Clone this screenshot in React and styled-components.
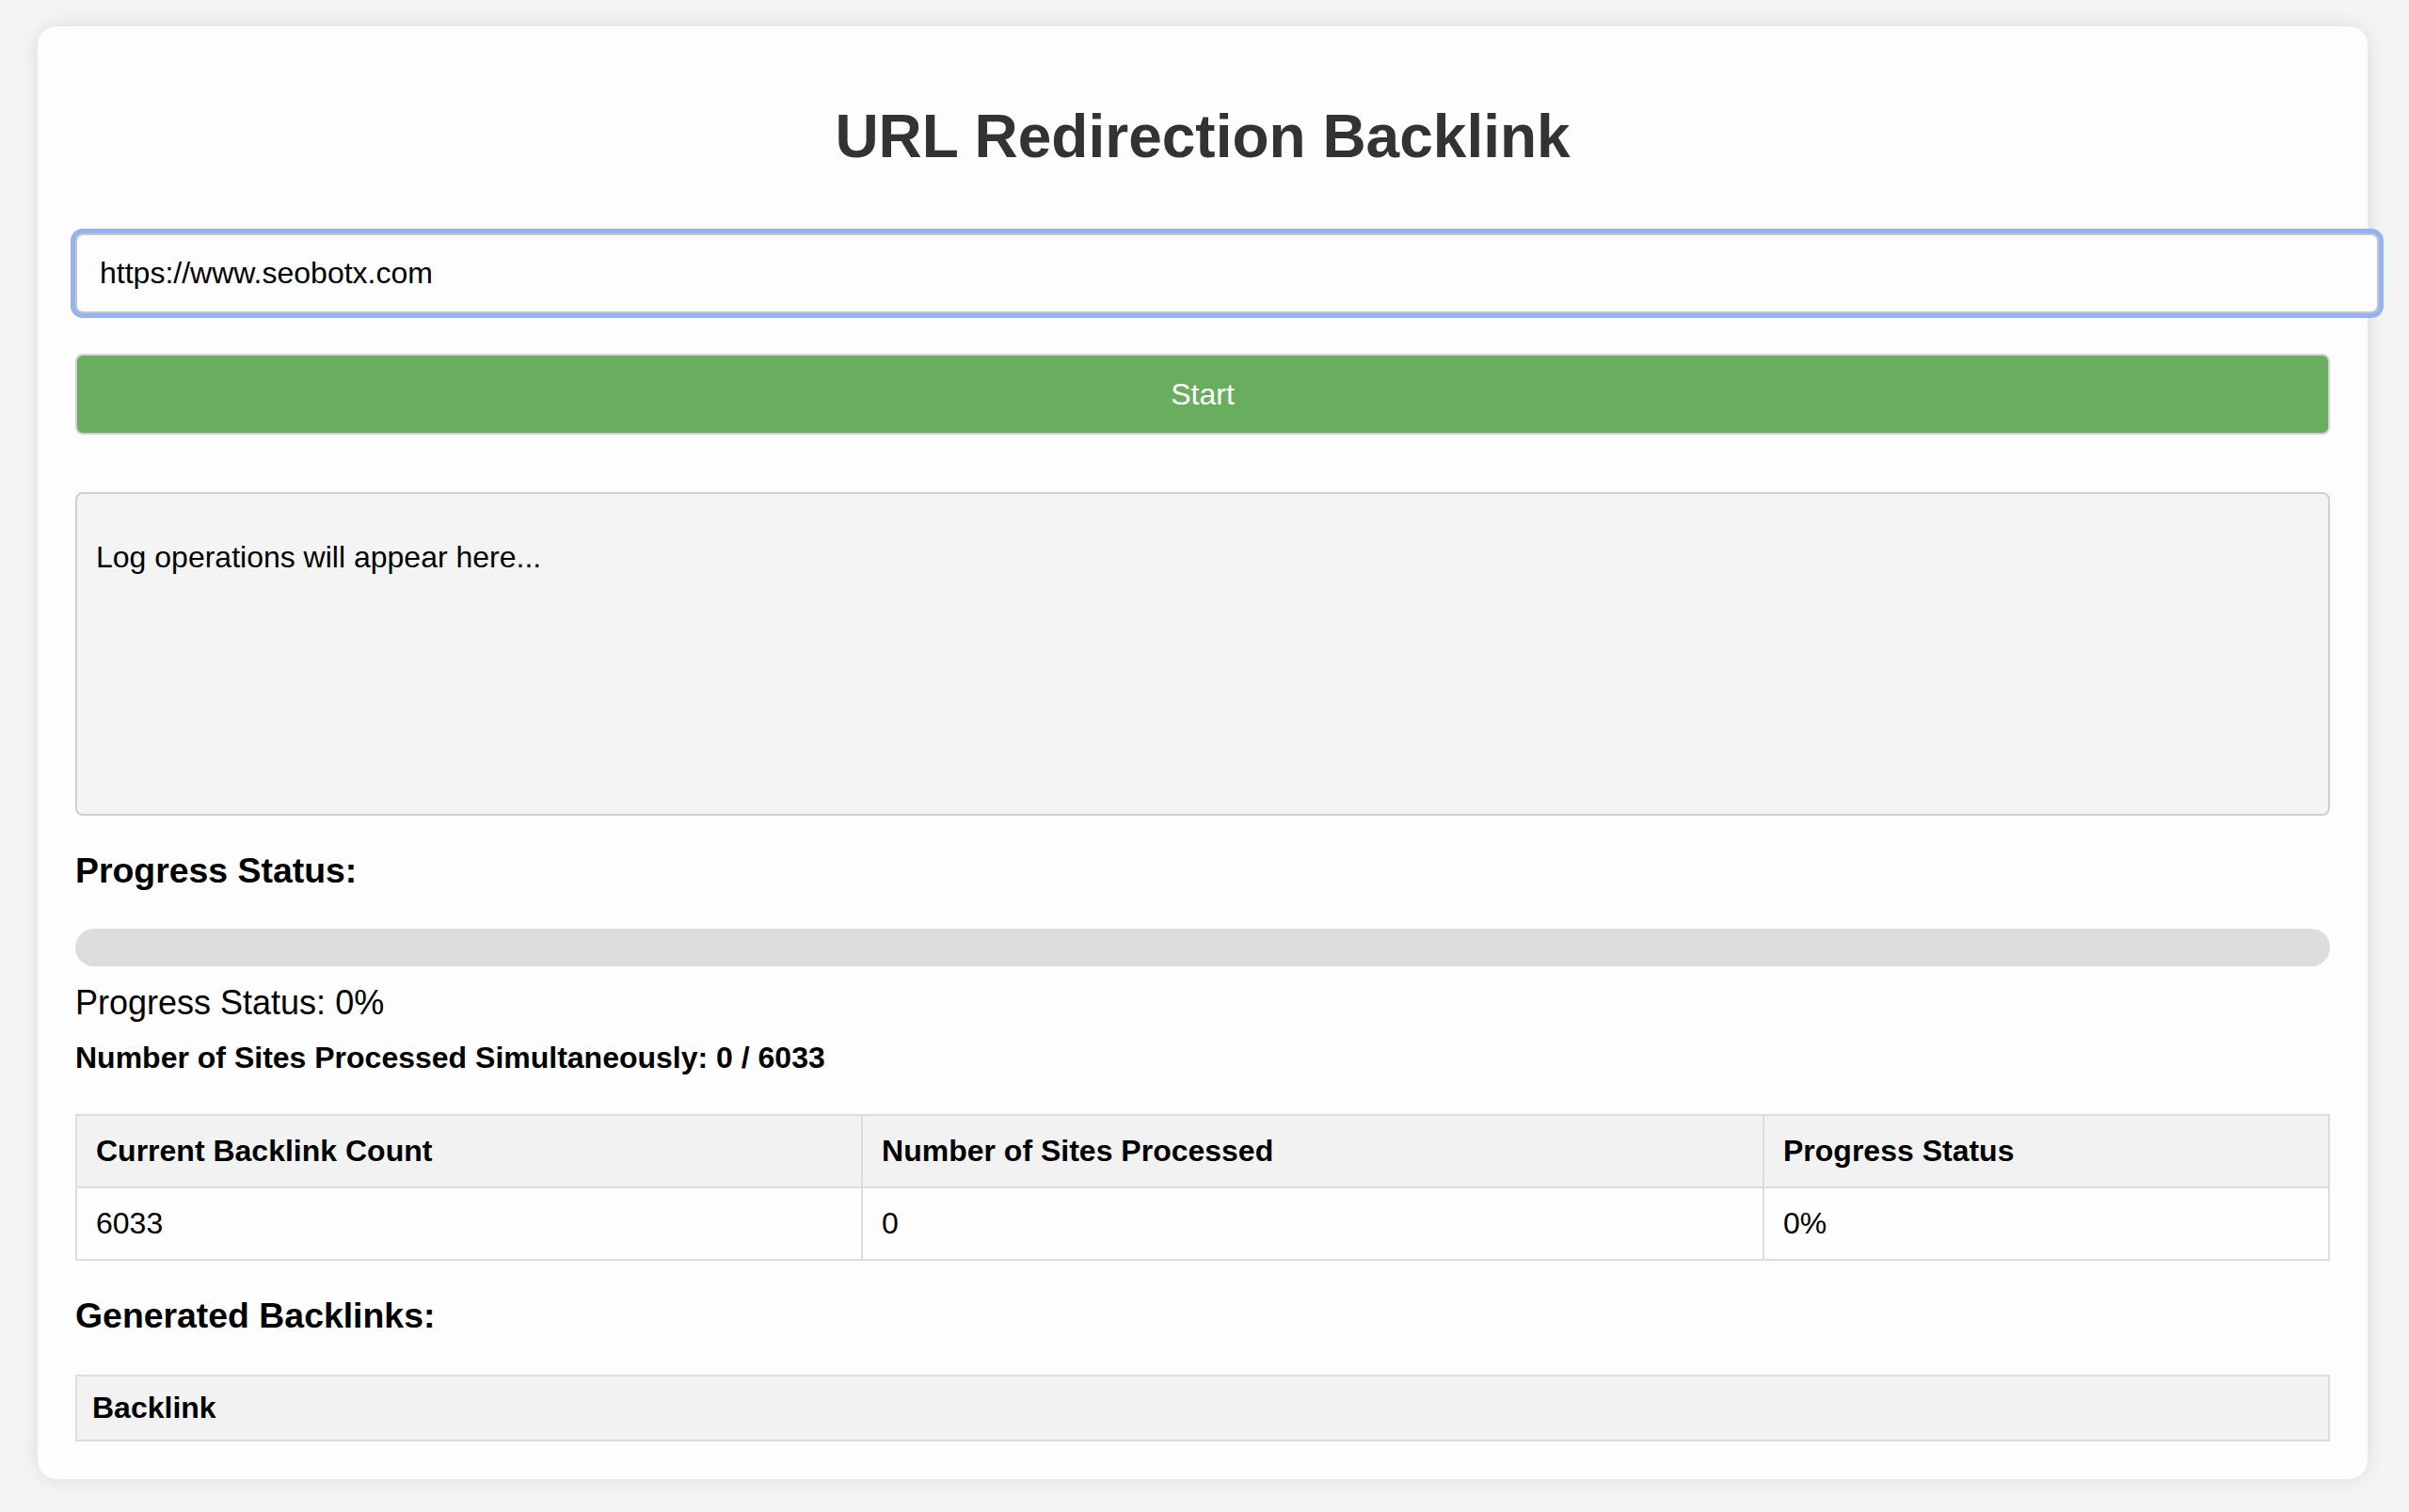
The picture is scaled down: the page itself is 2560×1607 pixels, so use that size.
import React from "react";
import styled, { createGlobalStyle } from "styled-components";

const GlobalStyle = createGlobalStyle`
  html, body {
    margin: 0;
    padding: 0;
    background-color: #f4f4f4;
    font-family: "Liberation Sans", Arial, Helvetica, sans-serif;
    color: #000;
  }
`;

const Page = styled.div`
  min-height: 1607px;
  box-sizing: border-box;
  padding: 28px 44px 34px 40px;
`;

const Card = styled.div`
  background-color: #fdfdfd;
  border-radius: 20px;
  box-shadow: 0 0 20px rgba(0, 0, 0, 0.1);
  padding: 40px;
`;

const Title = styled.h1`
  margin: 40px 0 0;
  font-size: 64px;
  line-height: 74px;
  font-weight: bold;
  text-align: center;
  color: #333;
`;

const UrlInput = styled.input`
  display: block;
  width: 100%;
  height: 33px;
  margin: 66px 0 0;
  padding: 24px;
  border: 2px solid #c4c4c4;
  border-radius: 8px;
  background: #fdfdfd;
  font-family: "Liberation Sans", Arial, sans-serif;
  font-size: 32px;
  line-height: 33px;
  color: #000;
  caret-color: #2f6fe8;
  outline: none;
  box-shadow: 0 0 0 5px #93b3f2;
`;

const StartButton = styled.button`
  display: block;
  width: 100%;
  height: 86px;
  margin-top: 43px;
  box-sizing: border-box;
  border: 2px solid #d2d2d2;
  border-radius: 8px;
  background-color: #69ae5e;
  color: #fff;
  font-family: "Liberation Sans", Arial, sans-serif;
  font-size: 32px;
  cursor: pointer;
`;

const LogBox = styled.div`
  margin-top: 61px;
  height: 300px;
  padding: 20px;
  border: 2px solid #cfcfcf;
  border-radius: 8px;
  background-color: #f4f4f4;
  overflow-y: auto;
`;

const LogLine = styled.p`
  margin: 29px 0 0;
  font-size: 32px;
  line-height: 37px;
`;

const SectionTitle = styled.h3`
  margin: ${(p) => p.$top}px 0 0;
  font-size: 37.4px;
  line-height: 43px;
  font-weight: bold;
`;

const Track = styled.div`
  margin-top: 40px;
  height: 40px;
  border-radius: 20px;
  background-color: #dddddd;
  overflow: hidden;
`;

const Fill = styled.div`
  height: 100%;
  background-color: #69ae5e;
`;

const StatusText = styled.div`
  margin-top: 18px;
  font-size: 36px;
  line-height: 41px;
`;

const CountText = styled.div`
  margin-top: 20px;
  font-size: 32px;
  line-height: 37px;
  font-weight: bold;
`;

const Table = styled.table`
  width: 100%;
  margin-top: ${(p) => p.$top}px;
  border-collapse: collapse;
  font-size: 32px;
  line-height: 35px;
`;

const Th = styled.th`
  padding: ${(p) => p.$pad}px;
  border: 2px solid #dddddd;
  background-color: #f2f2f2;
  text-align: left;
  font-weight: bold;
`;

const Td = styled.td`
  padding: 20px;
  border: 2px solid #dddddd;
  text-align: left;
`;

export default function App() {
  const total = 6033;
  const processed = 0;
  const percent = 0;

  return (
    <>
      <GlobalStyle />
      <Page>
        <Card>
          <Title>URL Redirection Backlink</Title>
          <UrlInput type="text" defaultValue="https://www.seobotx.com" autoFocus />
          <StartButton>Start</StartButton>

          <LogBox>
            <LogLine>Log operations will appear here...</LogLine>
          </LogBox>

          <SectionTitle $top={37}>Progress Status:</SectionTitle>
          <Track>
            <Fill style={{ width: `${percent}%` }} />
          </Track>
          <StatusText>Progress Status: {percent}%</StatusText>
          <CountText>
            Number of Sites Processed Simultaneously: {processed} / {total}
          </CountText>

          <Table $top={41}>
            <thead>
              <tr>
                <Th $pad={20}>Current Backlink Count</Th>
                <Th $pad={20}>Number of Sites Processed</Th>
                <Th $pad={20}>Progress Status</Th>
              </tr>
            </thead>
            <tbody>
              <tr>
                <Td>{total}</Td>
                <Td>{processed}</Td>
                <Td>{percent}%</Td>
              </tr>
            </tbody>
          </Table>

          <SectionTitle $top={37}>Generated Backlinks:</SectionTitle>
          <Table $top={41}>
            <thead>
              <tr>
                <Th $pad={16}>Backlink</Th>
              </tr>
            </thead>
            <tbody></tbody>
          </Table>
        </Card>
      </Page>
    </>
  );
}
